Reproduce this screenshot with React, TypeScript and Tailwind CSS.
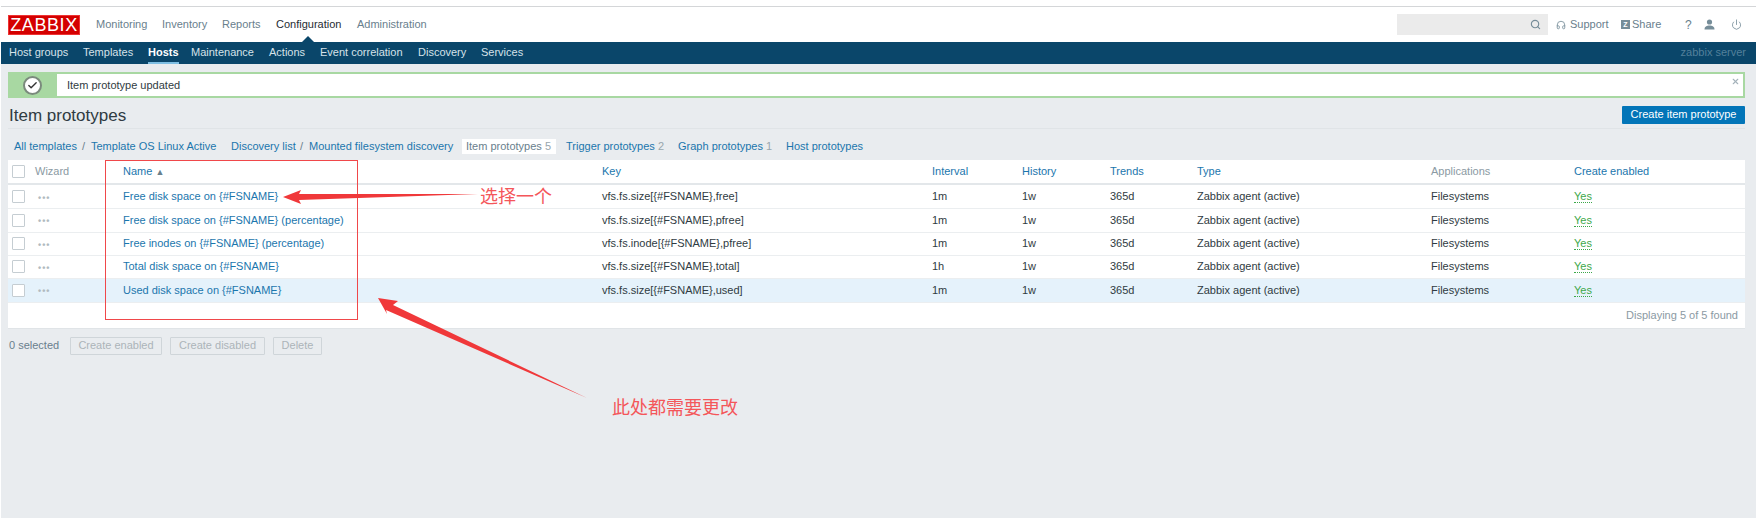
import { Search, Headphones, Power, Check, X } from "lucide-react";

const sans = "font-['Liberation_Sans',Arial,sans-serif]";

const topMenu = [
  { label: "Monitoring", cls: "w-[66px]" },
  { label: "Inventory", cls: "w-[60px]" },
  { label: "Reports", cls: "w-[54px]" },
  { label: "Configuration", cls: "w-[81px] text-[#1f2c33]" },
  { label: "Administration", cls: "w-[80px]" },
];

const subMenu = [
  { label: "Host groups", cls: "w-[74px]" },
  { label: "Templates", cls: "w-[65px]" },
  { label: "Hosts", cls: "w-[43px] text-white font-bold" },
  { label: "Maintenance", cls: "w-[78px]" },
  { label: "Actions", cls: "w-[51px]" },
  { label: "Event correlation", cls: "w-[98px]" },
  { label: "Discovery", cls: "w-[63px]" },
  { label: "Services", cls: "w-[50px]" },
];

const rows = [
  { name: "Free disk space on {#FSNAME}", key: "vfs.fs.size[{#FSNAME},free]", interval: "1m" },
  { name: "Free disk space on {#FSNAME} (percentage)", key: "vfs.fs.size[{#FSNAME},pfree]", interval: "1m" },
  { name: "Free inodes on {#FSNAME} (percentage)", key: "vfs.fs.inode[{#FSNAME},pfree]", interval: "1m" },
  { name: "Total disk space on {#FSNAME}", key: "vfs.fs.size[{#FSNAME},total]", interval: "1h" },
  { name: "Used disk space on {#FSNAME}", key: "vfs.fs.size[{#FSNAME},used]", interval: "1m" },
];

const Checkbox = () => (
  <span className="block w-[13px] h-[13px] ml-1 bg-white border border-[#c5cdd2] rounded-[1px]" />
);

const DisabledButton = ({ label, cls }: { label: string; cls: string }) => (
  <span className={`flex items-center justify-center h-[18px] border border-[#cfd5d9] rounded-[1px] text-[#acb4b9] bg-[#e9ecef] ${cls}`}>
    {label}
  </span>
);

export default function App() {
  return (
    <div className={`relative min-h-screen overflow-hidden bg-[#e9ecef] text-[11px] text-[#2f3b42] ${sans}`}>
      <div className="h-[7px] bg-white border-b border-[#d4d6d8]" />

      {/* top menu */}
      <header className="flex items-center h-[35px] bg-white pl-2 pr-[10px]">
        <span className="flex items-center justify-center w-[72px] h-[20px] bg-[#d40000] text-white text-[18px] tracking-[0.6px] leading-none border border-[#e33]">
          ZABBIX
        </span>
        <nav className="flex ml-4 text-[#69808d]">
          {topMenu.map((m) => (
            <span key={m.label} className={m.cls}>{m.label}</span>
          ))}
        </nav>
        <div className="flex items-center justify-end w-[151px] h-[21px] ml-auto bg-[#ebebeb] pr-[7px] mr-[8px]">
          <Search size={11} strokeWidth={2.5} className="text-[#768d99]" />
        </div>
        <Headphones size={10} strokeWidth={2} className="text-[#768d99] mr-[4px]" />
        <span className="text-[#69808d] w-[51px]">Support</span>
        <span className="flex items-center justify-center w-[9px] h-[9px] bg-[#768d99] text-white text-[7px] font-bold leading-none mr-[2px]">Z</span>
        <span className="text-[#69808d] w-[53px]">Share</span>
        <span className="text-[#69808d] w-[19px] text-[12px]">?</span>
        <svg width="11" height="11" viewBox="0 0 11 11" className="mr-[16px]" fill="#768d99">
          <circle cx="5.5" cy="3" r="2.6" />
          <path d="M0.5 10.5c0-3 2.2-4 5-4s5 1 5 4z" />
        </svg>
        <Power size={11} strokeWidth={1.8} className="text-[#768d99] mr-[4px]" />
        <span className="absolute left-[302px] top-[36px] w-0 h-0 border-x-[6px] border-x-transparent border-b-[6px] border-b-[#0a466a]" />
      </header>

      {/* sub menu */}
      <nav className="flex items-stretch h-[22px] bg-[#0a466a] ml-px pl-2 pr-[10px] text-[#d6e2e9] leading-[20px]">
        {subMenu.map((m) => (
          <span key={m.label} className={m.cls}>
            <span className={m.label === "Hosts" ? "inline-block h-[22px] border-b-2 border-[#7fbfe3]" : ""}>{m.label}</span>
          </span>
        ))}
        <span className="ml-auto text-[#53809b]">zabbix server</span>
      </nav>

      <main className="pl-2 pr-[11px] pt-2">
        {/* message */}
        <div className="relative flex items-center h-[26px] bg-white border-2 border-[#a8d8a2]">
          <div className="flex items-center justify-center w-[47px] h-full bg-[#a8d8a2] pr-[3px]">
            <span className="flex items-center justify-center w-[19px] h-[19px] rounded-full bg-white border-2 border-[#7b8a7d]">
              <Check size={11} strokeWidth={3} className="text-[#333]" />
            </span>
          </div>
          <span className="ml-[10px]">Item prototype updated</span>
          <X size={9} strokeWidth={3} className="absolute right-[3px] top-[3px] text-[#a5b3bb]" />
        </div>

        {/* title */}
        <div className="flex items-center justify-between h-[23px] mt-2 pb-[5px] border-b border-[#e0e4e7]">
          <h1 className="pl-px pt-[2px] text-[17px] leading-none text-[#2f3b42]">Item prototypes</h1>
          <span className="flex items-center justify-center w-[123px] h-[18px] bg-[#0275b8] text-white text-[11px] rounded-[1px]">
            Create item prototype
          </span>
        </div>

        {/* breadcrumbs and tabs */}
        <div className="flex items-center h-[15px] mt-[10px] pl-[6px] whitespace-nowrap text-[#1b76ad]">
          <span className="w-[68px]">All templates</span>
          <span className="w-[9px] text-[#69808d]">/</span>
          <span className="w-[140px]">Template OS Linux Active</span>
          <span className="w-[69px]">Discovery list</span>
          <span className="w-[9px] text-[#69808d]">/</span>
          <span className="w-[153px]">Mounted filesystem discovery</span>
          <span className="flex items-center w-[94px] h-[15px] bg-white pl-[4px] text-[#69808d]">
            Item prototypes&nbsp;<span className="text-[#98a6ad]">5</span>
          </span>
          <span className="w-[122px] pl-[10px]">Trigger prototypes <span className="text-[#98a6ad]">2</span></span>
          <span className="w-[108px]">Graph prototypes <span className="text-[#98a6ad]">1</span></span>
          <span>Host prototypes</span>
        </div>

        {/* table */}
        <div className="mt-[6px] bg-white border-b border-[#e0e4e7]">
          <table className="w-full table-fixed border-collapse">
            <thead>
              <tr className="h-[24px] border-b-2 border-[#e3e7ea] text-left text-[#1b76ad] font-normal">
                <th className="w-[27px] font-normal"><Checkbox /></th>
                <th className="w-[88px] font-normal text-[#8b9aa3]">Wizard</th>
                <th className="w-[479px] font-normal">Name <span className="text-[9px] text-[#69808d]">▲</span></th>
                <th className="w-[330px] font-normal">Key</th>
                <th className="w-[90px] font-normal">Interval</th>
                <th className="w-[88px] font-normal">History</th>
                <th className="w-[87px] font-normal">Trends</th>
                <th className="w-[234px] font-normal">Type</th>
                <th className="w-[143px] font-normal text-[#8b9aa3]">Applications</th>
                <th className="font-normal">Create enabled</th>
              </tr>
            </thead>
            <tbody>
              {rows.map((r, i) => (
                <tr key={r.name} className={`border-b border-[#ebeef0] ${i === 2 || i === 3 ? "h-[23px]" : "h-[24px]"} ${i === 4 ? "bg-[#e5f2fb]" : ""}`}>
                  <td><Checkbox /></td>
                  <td className="pl-[3px] pt-[4px] text-[#b0bac0] text-[9px] tracking-[1px] font-bold">•••</td>
                  <td className="text-[#1b76ad]">{r.name}</td>
                  <td>{r.key}</td>
                  <td>{r.interval}</td>
                  <td>1w</td>
                  <td>365d</td>
                  <td>Zabbix agent (active)</td>
                  <td>Filesystems</td>
                  <td>
                    <span className="text-[#3da84a] border-b border-dotted border-[#3da84a]">Yes</span>
                  </td>
                </tr>
              ))}
            </tbody>
          </table>
          <div className="flex items-center justify-end h-[25px] pr-[7px] text-[#8b9aa3]">Displaying 5 of 5 found</div>
        </div>

        {/* selection actions */}
        <div className="flex items-center h-[18px] mt-2 pl-px text-[#69808d]">
          <span className="w-[61px]">0 selected</span>
          <DisabledButton label="Create enabled" cls="w-[92px]" />
          <DisabledButton label="Create disabled" cls="w-[95px] ml-2" />
          <DisabledButton label="Delete" cls="w-[49px] ml-2" />
        </div>
      </main>

      {/* screenshot annotations drawn on top of the page */}
      <div className="absolute left-0 inset-y-0 w-px bg-white" />
      <div className="absolute left-[105px] top-[160px] w-[253px] h-[160px] border border-[#f0484a]" />
      <svg className="absolute left-0 top-0 pointer-events-none" width="1756" height="518">
        <polygon points="283,197 301,190 299,194 478,194 299,200 301,204" fill="#f0383a" />
        <polygon points="378,298 398,301 393,305 587,398 386,310 387,314" fill="#f0383a" />
      </svg>
      <span className="absolute left-[480px] top-[182px] text-[18px] leading-[26px] text-[#f4565a] font-['Noto_Sans_CJK_SC',sans-serif]">选择一个</span>
      <span className="absolute left-[612px] top-[393px] text-[18px] leading-[26px] text-[#f4565a] font-['Noto_Sans_CJK_SC',sans-serif]">此处都需要更改</span>
    </div>
  );
}
